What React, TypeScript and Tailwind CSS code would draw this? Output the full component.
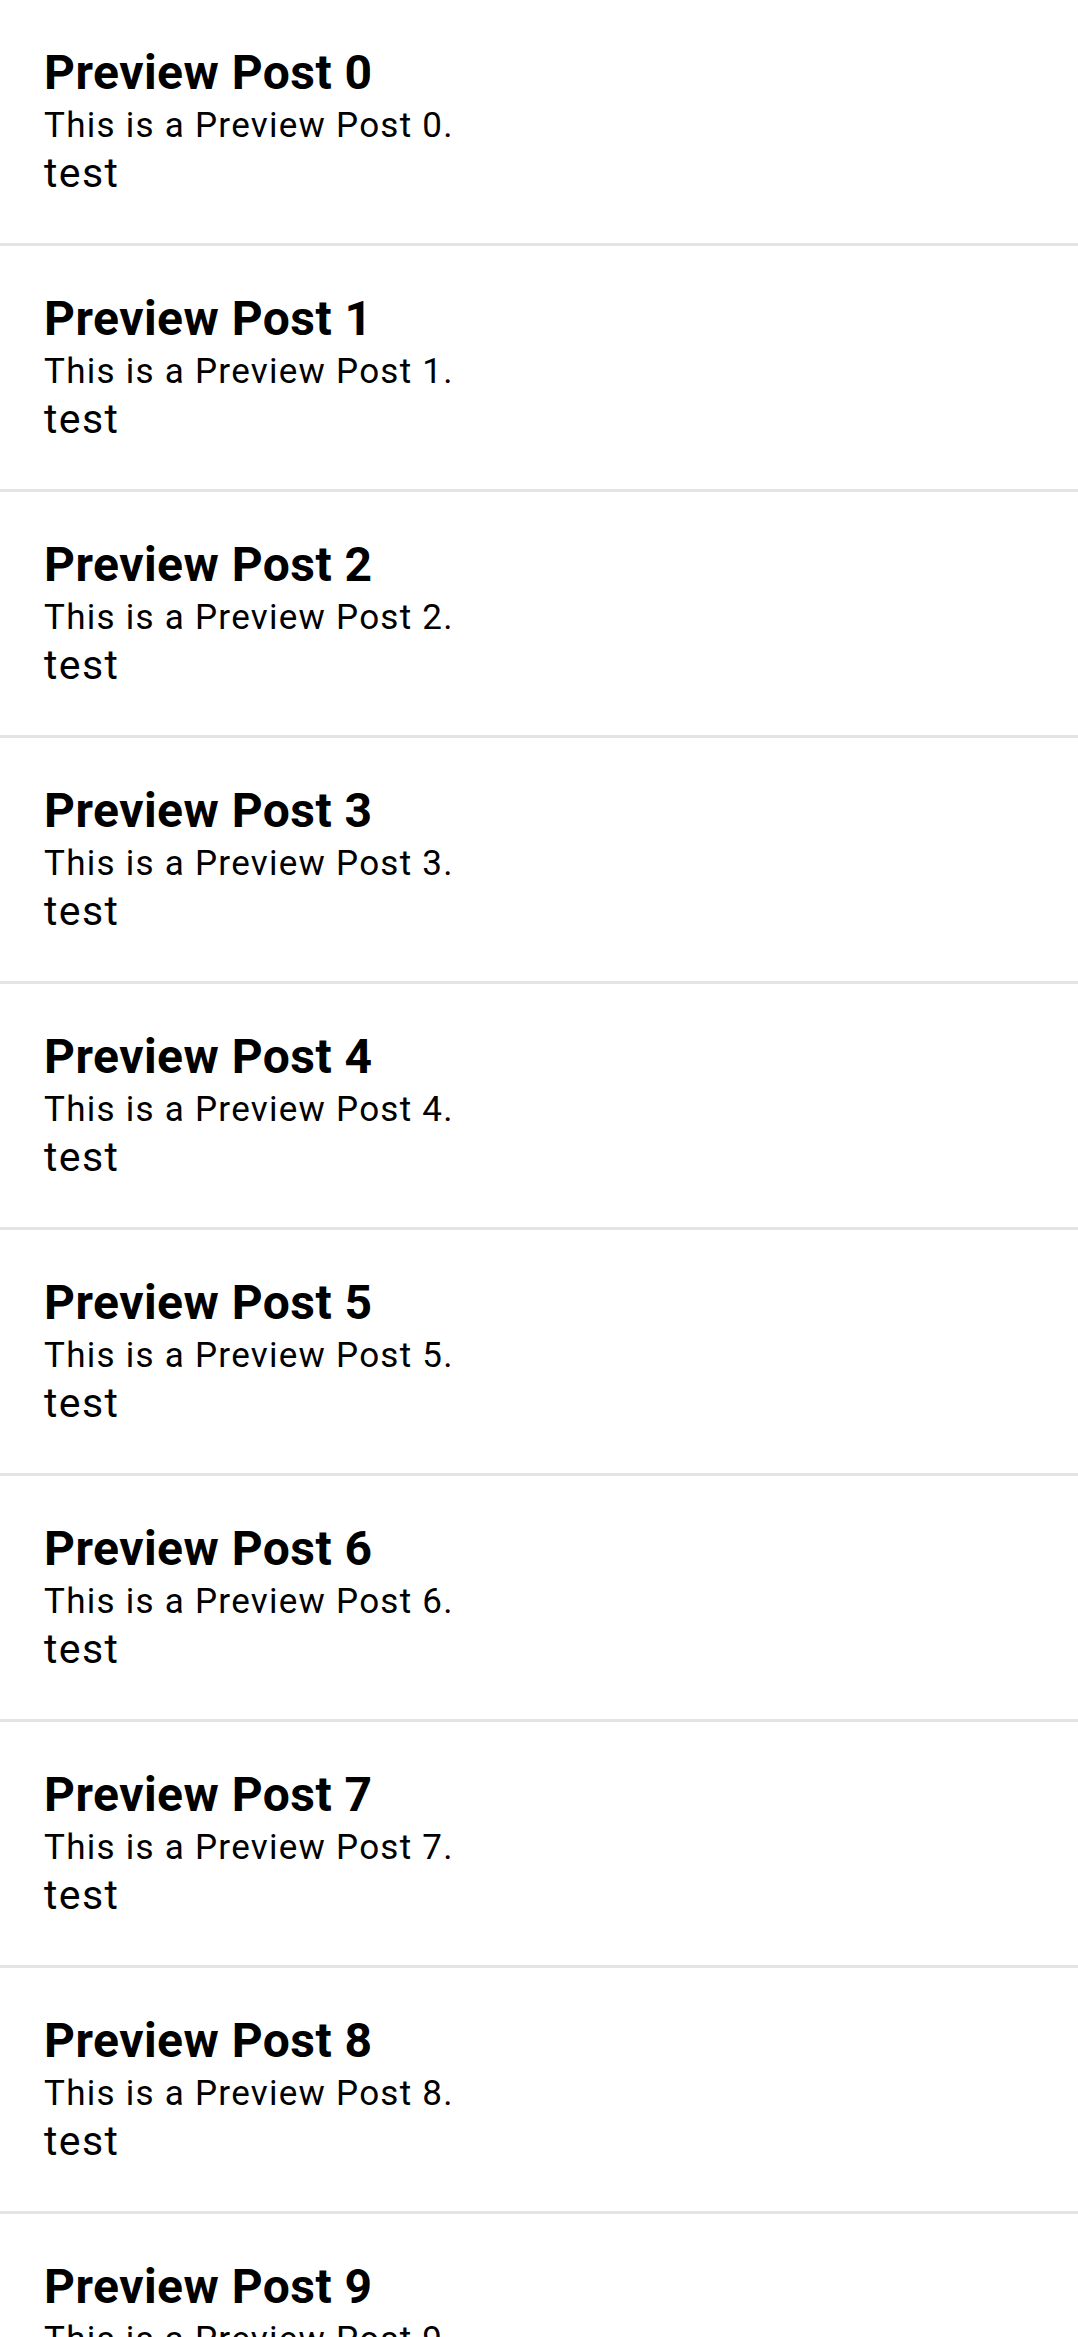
const posts = Array.from({ length: 10 }, (_, i) => ({
  title: `Preview Post ${i}`,
  body: `This is a Preview Post ${i}.`,
  tag: 'test',
}));

export default function App() {
  return (
    <div className="min-h-screen bg-white text-black" style={{ fontFamily: 'Roboto, "Liberation Sans", sans-serif' }}>
      {posts.map((p) => (
        <div key={p.title} className="border-b-[3px] border-[#e4e4e4] pl-[44px] pr-4 pt-[45px] pb-[46px]">
          <div className="text-[48px] leading-[56px] font-bold tracking-[0.01em]">{p.title}</div>
          <div className="text-[35px] leading-[49px] tracking-[0.036em]">{p.body}</div>
          <div className="text-[41px] leading-[47px] tracking-[0.035em]">{p.tag}</div>
        </div>
      ))}
    </div>
  );
}
